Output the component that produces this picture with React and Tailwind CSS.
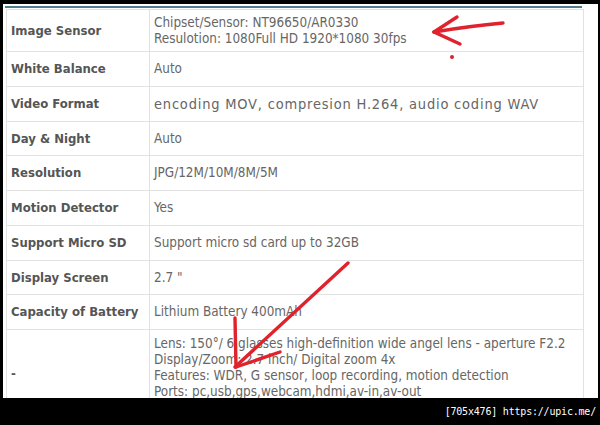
import React from "react";

const rows = [
  { label: "Image Sensor", value: ["Chipset/Sensor: NT96650/AR0330", "Resulotion: 1080Full HD 1920*1080 30fps"], h: "h-[42px]" },
  { label: "White Balance", value: ["Auto"], h: "h-[35px]" },
  { label: "Video Format", value: ["encoding MOV, compresion H.264, audio coding WAV"], h: "h-[35px]", wide: true },
  { label: "Day & Night", value: ["Auto"], h: "h-[34px]" },
  { label: "Resolution", value: ["JPG/12M/10M/8M/5M"], h: "h-[35px]" },
  { label: "Motion Detector", value: ["Yes"], h: "h-[35px]" },
  { label: "Support Micro SD", value: ["Support micro sd card up to 32GB"], h: "h-[35px]" },
  { label: "Display Screen", value: ['2.7 "'], h: "h-[34px]" },
  { label: "Capacity of Battery", value: ["Lithium Battery 400mAh"], h: "h-[35px]" },
  {
    label: "-",
    value: [
      "Lens: 150°/ 6 glasses high-definition wide angel lens - aperture F2.2",
      "Display/Zoom: 2.7 inch/ Digital zoom 4x",
      "Features: WDR, G sensor, loop recording, motion detection",
      "Ports: pc,usb,gps,webcam,hdmi,av-in,av-out",
    ],
    h: "h-[88px]",
    top: true,
  },
];

const SpecRow = ({ row }) => (
  <div className={`flex shrink-0 border-b border-[#e2e2e2] ${row.h}`}>
    <div className="flex w-[143px] shrink-0 items-center border-r border-[#e2e2e2] pl-[4px] text-[13px] font-bold text-[#555555]">
      {row.label}
    </div>
    <div
      className={`flex flex-col whitespace-nowrap pl-[4px] leading-[16px] text-[#666666] ${
        row.top ? "justify-start pt-[6px]" : "justify-center"
      } ${row.wide ? "text-[14.5px] tracking-[0.8px]" : "text-[13.4px]"}`}
    >
      {row.value.map((line, i) => (
        <span key={i}>{line}</span>
      ))}
    </div>
  </div>
);

const Arrows = () => (
  <svg className="pointer-events-none absolute left-0 top-0" width="600" height="425" viewBox="0 0 600 425">
    <g fill="none" stroke="#e0222c" strokeWidth="3.4" strokeLinecap="round" strokeLinejoin="round">
      <path d="M503 23 Q470 26 434 32" />
      <path d="M434 32 L457 17" />
      <path d="M434 32 L460 44" />
      <path d="M348 263 L235 367" />
      <path d="M235 318 L236 367" />
      <path d="M236 367 L280 352" />
    </g>
    <circle cx="452" cy="57" r="2" fill="#e0222c" />
  </svg>
);

export default function App() {
  return (
    <div
      className="relative flex h-[425px] w-[600px] flex-col overflow-hidden bg-black"
      style={{ fontFamily: "'DejaVu Sans Condensed', 'DejaVu Sans', sans-serif", fontStretch: "condensed" }}
    >
      <div className="ml-[3px] mt-[4px] flex h-[394px] w-[595px] shrink-0 flex-col overflow-hidden bg-white">
        <div className="ml-[2px] mt-[2px] h-[2px] w-[577px] shrink-0 bg-[#4f7d8c]" />
        <div className="ml-[3px] mt-[1px] flex w-[578px] shrink-0 flex-col border-x border-t border-[#e2e2e2]">
          {rows.map((row) => (
            <SpecRow key={row.label} row={row} />
          ))}
        </div>
      </div>
      <div className="flex flex-1 items-center justify-end pr-[4px] font-['DejaVu_Sans_Mono',monospace] text-[10px] tracking-[-0.2px] text-white">
        [705x476] https://upic.me/
      </div>
      <Arrows />
    </div>
  );
}
